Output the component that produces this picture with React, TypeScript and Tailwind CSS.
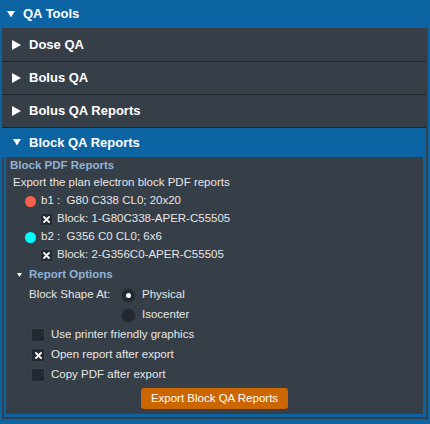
import React from "react";

const BLUE = "#0c64a3";

function TriRight() {
  return (
    <svg width="9" height="10" viewBox="0 0 9 10" className="shrink-0">
      <polygon points="0,0 9,5 0,10" fill="#fff" />
    </svg>
  );
}

function TriDown({ size = 9 }: { size?: number }) {
  return (
    <svg width={size} height={size * 0.8} viewBox="0 0 10 8" className="shrink-0">
      <polygon points="0,0 10,0 5,8" fill="#fff" />
    </svg>
  );
}

function XMark() {
  return (
    <svg width="7" height="7" viewBox="0 0 7 7">
      <path d="M1 1 L6 6 M6 1 L1 6" stroke="#fff" strokeWidth="1.8" strokeLinecap="round" />
    </svg>
  );
}

function Box({ checked, size = 14 }: { checked?: boolean; size?: number }) {
  return (
    <span
      style={{ width: size, height: size }}
      className="shrink-0 flex items-center justify-center rounded-[2px] border border-[#3b434d] bg-[#232930]"
    >
      {checked && <XMark />}
    </span>
  );
}

function Radio({ on }: { on?: boolean }) {
  return (
    <span className="shrink-0 w-[15px] h-[15px] rounded-full bg-[#22282f] border border-[#333a43] flex items-center justify-center">
      {on && <span className="w-[5px] h-[5px] rounded-full bg-white" />}
    </span>
  );
}

function Item({ title, first }: { title: string; first?: boolean }) {
  return (
    <div
      className={`${first ? "h-[34px]" : "h-[33px]"} flex items-center gap-[8px] pl-[10px] border-b border-[#22272e] text-white font-bold text-[13px]`}
    >
      <TriRight />
      <span>{title}</span>
    </div>
  );
}

export default function App() {
  return (
    <div className="w-[430px] h-[424px] overflow-hidden bg-[#0c64a3] font-['Liberation_Sans',Arial,sans-serif] text-[11.5px] text-[#e6e6e6]">
      <div className="h-[28px] flex items-center gap-[8px] pl-[7px] text-white font-bold text-[13px]">
        <TriDown size={8} />
        <span>QA Tools</span>
      </div>
      <div className="mx-[2px] bg-[#363e48] pr-[2px] pb-[2px]">
        <Item title="Dose QA" first />
        <Item title="Bolus QA" />
        <Item title="Bolus QA Reports" />
        <div className="h-[29px] flex items-center gap-[8px] pl-[11px] bg-[#0c64a3] text-white font-bold text-[13px]">
          <TriDown size={8} />
          <span>Block QA Reports</span>
        </div>
        <div className="ml-[2px] h-[260px] border-l-2 border-r-[3px] border-b-[3px] border-[#0c64a3] bg-[#363e48] flex flex-col">
          <div className="h-[17px] flex items-center pl-[4px] font-bold text-[#8fb3d6]">Block PDF Reports</div>
          <div className="h-[18px] flex items-center pl-[7px]">Export the plan electron block PDF reports</div>
          <div className="h-[18px] flex items-center pl-[19px] gap-[5px]">
            <span className="w-[11px] h-[11px] rounded-full bg-[#f8614b]" />
            <span className="whitespace-pre">b1 :  G80 C338 CL0; 20x20</span>
          </div>
          <div className="h-[18px] flex items-center pl-[34px] gap-[4px]">
            <Box checked size={13} />
            <span>Block: 1-G80C338-APER-C55505</span>
          </div>
          <div className="h-[18px] flex items-center pl-[19px] gap-[5px]">
            <span className="w-[11px] h-[11px] rounded-full bg-[#00ffff]" />
            <span className="whitespace-pre">b2 :  G356 C0 CL0; 6x6</span>
          </div>
          <div className="h-[18px] flex items-center pl-[34px] gap-[4px]">
            <Box checked size={13} />
            <span>Block: 2-G356C0-APER-C55505</span>
          </div>
          <div className="h-[21px] flex items-center pl-[11px] gap-[7px] font-bold text-[#8fb3d6]">
            <TriDown size={5} />
            <span>Report Options</span>
          </div>
          <div className="h-[20px] flex items-center pl-[23px]">
            <span className="w-[92px]">Block Shape At:</span>
            <Radio on />
            <span className="ml-[6px]">Physical</span>
          </div>
          <div className="h-[20px] flex items-center pl-[115px]">
            <Radio />
            <span className="ml-[6px]">Isocenter</span>
          </div>
          <div className="h-[20px] flex items-center pl-[25px] gap-[6px]">
            <Box />
            <span>Use printer friendly graphics</span>
          </div>
          <div className="h-[20px] flex items-center pl-[25px] gap-[6px]">
            <Box checked />
            <span>Open report after export</span>
          </div>
          <div className="h-[20px] flex items-center pl-[25px] gap-[6px]">
            <Box />
            <span>Copy PDF after export</span>
          </div>
          <div className="mt-[3px] flex justify-center">
            <button className="h-[21px] px-[10px] rounded-[3px] bg-[#cc6600] text-white text-[11.5px]">
              Export Block QA Reports
            </button>
          </div>
        </div>
      </div>
    </div>
  );
}
